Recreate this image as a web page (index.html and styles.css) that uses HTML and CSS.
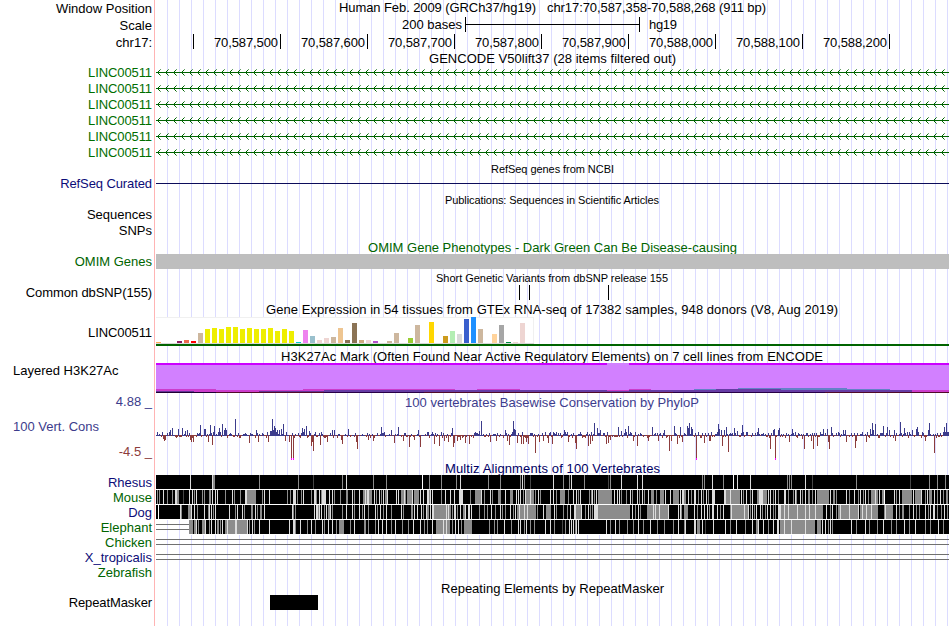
FILE: index.html
```
<!DOCTYPE html>
<html>

<head>
    <meta charset="UTF-8" />
    <title>chr17:70,587,358-70,588,268</title>
    <link rel="stylesheet" href="styles.css">
</head>

<body>
    <main>
        <div class="row h17">
            <label>Window Position</label>
            <svg viewBox="155 0 795 17"><text x="339" y="12" textLength="197">Human Feb. 2009 (GRCh37/hg19)</text><text x="547" y="12" textLength="219">chr17:70,587,358-70,588,268 (911 bp)</text></svg>
        </div>
        <div class="row h17">
            <label>Scale</label>
            <svg viewBox="155 17 795 17"><text x="402" y="29" textLength="60">200 bases</text><path d="M465 17h1v15h-1zM639 17h1v15h-1zM465 24h174v1h-174z" /><text x="649" y="29" textLength="28">hg19</text></svg>
        </div>
        <div class="row h16 low-label">
            <label>chr17:</label>
            <svg viewBox="155 34 795 16" id="ruler"></svg>
        </div>
        <div class="row h14">
            <label></label>
            <svg viewBox="155 50 795 14"><text x="429" y="63" textLength="247">GENCODE V50lift37 (28 items filtered out)</text></svg>
        </div>
        <div class="row h16 gene low-label tight"><label>LINC00511</label><svg viewBox="155 0 795 16"></svg></div>
        <div class="row h16 gene low-label tight"><label>LINC00511</label><svg viewBox="155 0 795 16"></svg></div>
        <div class="row h16 gene low-label tight"><label>LINC00511</label><svg viewBox="155 0 795 16"></svg></div>
        <div class="row h16 gene low-label tight"><label>LINC00511</label><svg viewBox="155 0 795 16"></svg></div>
        <div class="row h16 gene low-label tight"><label>LINC00511</label><svg viewBox="155 0 795 16"></svg></div>
        <div class="row h16 gene low-label tight"><label>LINC00511</label><svg viewBox="155 0 795 16"></svg></div>
        <div class="row h16">
            <label></label>
            <svg viewBox="155 160 795 16"><text class="small" x="491" y="173" textLength="123">RefSeq genes from NCBI</text></svg>
        </div>
        <div class="row h15 navy tight">
            <label>RefSeq Curated</label>
            <svg viewBox="155 176 795 15"><rect x="156" y="183" width="793" height="1" fill="#0c0c5a" /></svg>
        </div>
        <div class="row h16">
            <label></label>
            <svg viewBox="155 191 795 16"><text class="small" x="445" y="204" textLength="214">Publications: Sequences in Scientific Articles</text></svg>
        </div>
        <div class="row h16"><label>Sequences</label></div>
        <div class="row h16"><label>SNPs</label></div>
        <div class="row h15 green">
            <label></label>
            <svg viewBox="155 239 795 15"><text x="368" y="252" textLength="369">OMIM Gene Phenotypes - Dark Green Can Be Disease-causing</text></svg>
        </div>
        <div class="row h16 green">
            <label>OMIM Genes</label>
            <svg viewBox="155 254 795 16"><rect x="156" y="254" width="793" height="15" fill="#bebebe" /></svg>
        </div>
        <div class="row h15">
            <label></label>
            <svg viewBox="155 270 795 15"><text class="small" x="436" y="282" textLength="232">Short Genetic Variants from dbSNP release 155</text></svg>
        </div>
        <div class="row h15 tight">
            <label>Common dbSNP(155)</label>
            <svg viewBox="155 285 795 15"><path d="M519 285h1v15h-1zM529 285h1v15h-1zM608 285h1v15h-1z" /></svg>
        </div>
        <div class="row h17">
            <label></label>
            <svg viewBox="155 300 795 17"><text x="266" y="314" textLength="572">Gene Expression in 54 tissues from GTEx RNA-seq of 17382 samples, 948 donors (V8, Aug 2019)</text></svg>
        </div>
        <div class="row h29 tight">
            <label>LINC00511</label>
            <svg viewBox="155 317 795 29" id="gtex"></svg>
        </div>
        <div class="row h17">
            <label></label>
            <svg viewBox="155 346 795 17"><text x="281" y="361" textLength="542">H3K27Ac Mark (Often Found Near Active Regulatory Elements) on 7 cell lines from ENCODE</text></svg>
        </div>
        <div class="row h30">
            <label class="left">Layered H3K27Ac</label>
            <svg viewBox="155 363 795 30" id="h3k27ac"></svg>
        </div>
        <div class="row h18 cons">
            <label>4.88 _</label>
            <svg viewBox="155 393 795 18"><text x="405" y="407" textLength="294">100 vertebrates Basewise Conservation by PhyloP</text></svg>
        </div>
        <div class="row h50 cons">
            <label class="scores"><span class="left">100 Vert. Cons</span><span class="low">-4.5 _</span></label>
            <svg viewBox="155 411 795 50" id="phylop"></svg>
        </div>
        <div class="row h14 navy">
            <label></label>
            <svg viewBox="155 461 795 14"><text x="445" y="473" textLength="215">Multiz Alignments of 100 Vertebrates</text></svg>
        </div>
        <div class="row h15 navy"><label>Rhesus</label><svg viewBox="155 0 795 15" id="rhesus"></svg></div>
        <div class="row h15 green"><label>Mouse</label><svg viewBox="155 0 795 15" id="mouse"></svg></div>
        <div class="row h15 navy"><label>Dog</label><svg viewBox="155 0 795 15" id="dog"></svg></div>
        <div class="row h15 green"><label>Elephant</label><svg viewBox="155 0 795 15" id="elephant"></svg></div>
        <div class="row h15 green">
            <label>Chicken</label>
            <svg viewBox="155 0 795 15"><path fill="#707070" d="M156 4h793v1h-793zM156 9h793v1h-793z" /></svg>
        </div>
        <div class="row h15 navy">
            <label>X_tropicalis</label>
            <svg viewBox="155 0 795 15"><path fill="#707070" d="M156 4h793v1h-793zM156 9h793v1h-793z" /></svg>
        </div>
        <div class="row h15 green"><label>Zebrafish</label></div>
        <div class="row h15">
            <label></label>
            <svg viewBox="155 580 795 15"><text x="441" y="593" textLength="223">Repeating Elements by RepeatMasker</text></svg>
        </div>
        <div class="row h15 tight">
            <label>RepeatMasker</label>
            <svg viewBox="155 595 795 15"><rect x="270" y="595" width="48" height="15" /></svg>
        </div>
        <div class="row rest"><label></label></div>
    </main>
    <script src="tracks.js"></script>
</body>

</html>
```
FILE: styles.css
```
body {
    margin: 0;
    background-color: #fff;
    font-family: "Liberation Sans", Arial, sans-serif;
    font-size: 13px;
    color: #000;
}

main {
    display: flex;
    flex-direction: column;
    width: 950px;
    height: 626px;
    overflow: hidden;
    /* guide lines every 12px, first one at 167 */
    background: repeating-linear-gradient(to right, #dcdcff 0, #dcdcff 1px, transparent 1px, transparent 12px) 167px 0 no-repeat;
}

.row {
    display: grid;
    grid-template-columns: 155px 795px;
    grid-template-rows: 100%;
    flex: none;
    fill: #000;
}

.row label {
    box-sizing: border-box;
    padding-right: 2px;
    border-right: 1px solid #ffb4b4;
    text-align: right;
    white-space: pre;
}

svg {
    display: block;
    width: 795px;
    height: 100%;
    overflow: visible;
    shape-rendering: crispEdges;
}

.small {
    font-size: 11px;
}

.h14 { height: 14px; line-height: 14px; }
.h15 { height: 15px; line-height: 15px; }
.h16 { height: 16px; line-height: 16px; }
.h17 { height: 17px; line-height: 17px; }
.h18 { height: 18px; line-height: 18px; }
.h29 { height: 29px; line-height: 31px; }
.h30 { height: 30px; line-height: 15px; }
.h50 { height: 50px; line-height: 15px; }

.rest {
    flex: 1;
}

.low-label {
    line-height: 18px;
}

.tight label {
    letter-spacing: -0.1px;
}

.navy {
    color: #0c0c78;
    fill: #000064;
}

.green {
    color: #006400;
    fill: #006400;
}

.gene {
    color: #006e00;
    fill: #006400;
}

.cons {
    color: #3c3c8c;
    fill: #3c3c8c;
}

.row .left {
    padding-left: 13px;
    text-align: left;
}

.row .scores {
    display: flex;
    flex-direction: column;
    padding-top: 8px;
    gap: 10px;
}

.row .low {
    color: #8c3c3c;
}
```
FILE: tracks.js
```
function rect(x, y, w, h, color) {
    return `<rect x="${x}" y="${y}" width="${w}" height="${h}" fill="${color}"/>`;
}

// base position ruler
let ruler = '<rect x="193" y="34" width="1" height="15"/>';
['70,587,500', '70,587,600', '70,587,700', '70,587,800', '70,587,900', '70,588,000', '70,588,100', '70,588,200'].forEach((pos, i) => {
    let x = 280 + i * 87;
    ruler += `<text x="${x - 66}" y="47" textLength="64">${pos}</text><rect x="${x}" y="34" width="1" height="15"/>`;
});
document.getElementById('ruler').innerHTML = ruler;

// genes on the minus strand
let gene = rect(156, 8, 793, 1, '#006400');
for (let x = 157; x < 947; x += 8) {
    gene += `<path d="M${x + 1} 7h1v3h-1zM${x + 2} 6h1v1h-1zM${x + 2} 10h1v1h-1z"/>`;
    gene += `<path opacity=".6" d="M${x + 3} 5h1v1h-1zM${x + 3} 11h1v1h-1z"/>`;
}
document.querySelectorAll('.gene svg').forEach(svg => svg.innerHTML = gene);

// GTEx, one bar for each tissue
let tissues = [
    [1, '#ffaa56'], [0, '#cdb79e'], [0, '#8fbc8f'], [2, '#8b1c62'], [3, '#ee6a50'], [2, '#ff0000'], [10, '#cdb79e'],
    [14, '#eeee00'], [15, '#eeee00'], [14, '#eeee00'], [16, '#eeee00'], [16, '#eeee00'], [14, '#eeee00'], [15, '#eeee00'],
    [14, '#eeee00'], [14, '#eeee00'], [15, '#eeee00'], [12, '#eeee00'], [14, '#eeee00'], [12, '#eeee00'],
    [1, '#00cdcd'], [13, '#ee82ee'], [7, '#9ac0cd'], [3, '#eed5d2'], [5, '#eed5d2'], [6, '#cdb79e'], [15, '#eec591'],
    [3, '#8b7355'], [20, '#8b7355'], [3, '#cdaa7d'], [3, '#eed5d2'], [2, '#b452cd'], [0, '#7a378b'], [2, '#cdb79e'],
    [10, '#cdb79e'], [0, '#cdb79e'], [5, '#9acd32'], [18, '#cdb79e'], [0, '#7a67ee'], [21, '#ffd700'], [0, '#ffb6c1'],
    [7, '#cd9b1d'], [12, '#b4eeb4'], [9, '#d9d9d9'], [24, '#3a5fcd'], [26, '#1e90ff'], [14, '#cdb79e'], [0, '#cdb79e'],
    [9, '#ffd39b'], [18, '#a6a6a6'], [1, '#008b45'], [1, '#eed5d2'], [20, '#eed5d2'], [0, '#ff00ff']
];
let gtex = rect(156, 317, 378, 27, '#f0f0f0') + rect(156, 318, 377, 25, '#fff') + rect(156, 343, 378, 1, '#d8d8d8');
tissues.forEach(([h, color], i) => gtex += rect(156 + i * 7, 343 - h, 5, h, color));
gtex += rect(156, 344, 793, 2, '#006400');
document.getElementById('gtex').innerHTML = gtex;

// H3K27Ac, layered signal of the cell lines
document.getElementById('h3k27ac').innerHTML =
    rect(156, 363, 793, 30, '#d280ff') + rect(156, 363, 451, 2, '#cc00ff') + rect(629, 363, 320, 2, '#cc00ff') +
    rect(156, 390, 793, 2, '#cc3ccc') +
    [[156, 60], [303, 152], [477, 43], [629, 22]].map(([x, w]) => rect(x, 389, w, 1, '#cc3ccc')).join('') +
    rect(156, 391, 38, 1, '#663399') + rect(259, 391, 65, 1, '#663399') + rect(324, 390, 283, 2, '#663ca5') +
    rect(607, 391, 22, 1, '#663ca5') + rect(629, 390, 283, 2, '#663ca5') +
    rect(716, 389, 131, 1, '#663ca5') + rect(694, 389, 22, 1, '#6482c8') + rect(738, 388, 109, 1, '#6482c8') +
    rect(781, 389, 109, 1, '#6482c8') + rect(156, 392, 793, 1, '#500a28') +
    rect(156, 392, 60, 1, '#1e0032') + rect(324, 392, 100, 1, '#280046') + rect(673, 392, 152, 1, '#280046');

// PhyloP, [offset, score in pixels]
let scores = [
    [1, 3], [7, -4], [8, -6], [9, -5], [13, 3], [14, 5], [16, 7], [22, 6], [26, 7], [29, 4], [31, 5], [34, -5], [35, -7], [37, -7], [44, 10],
    [48, 6], [49, 6], [52, -7], [54, 10], [56, -10], [58, 9], [63, 7], [66, 11], [68, 5], [69, 7], [70, 5], [79, 16], [93, -8], [100, 5],
    [102, -7], [112, -7], [114, 4], [115, 4], [116, 16], [117, 5], [118, 9], [119, 7], [121, 5], [123, 5], [125, 6], [127, 11], [129, -6],
    [133, -7], [135, -25], [137, -25], [146, 7], [148, 6], [150, 9], [153, 4], [155, -11], [156, -7], [157, -16], [164, -10], [171, -7],
    [176, 5], [178, 5], [185, -5], [186, -9], [192, 6], [200, -7], [201, -14], [212, -5], [217, -6], [225, 8], [235, 5], [238, -8],
    [242, 8], [247, -6], [253, -12], [258, -5], [262, 5], [264, -12], [278, -9], [283, -11], [288, -6], [292, -7], [296, 7], [297, -12],
    [298, -8], [301, -6], [304, -5], [309, -8], [313, -9], [323, 4], [325, 14], [334, -7], [340, -6], [349, 5], [351, -6], [353, -10],
    [357, 14], [358, 6], [359, 5], [361, -8], [365, -9], [367, -9], [370, -7], [372, -9], [379, -18], [383, -7], [387, -6], [392, -8],
    [396, -9], [408, 5], [412, -7], [419, -8], [420, -14], [432, -11], [434, -9], [436, -6], [438, 12], [441, 7], [444, 5], [450, -9],
    [452, -8], [454, -5], [462, 8], [465, 4], [469, 6], [472, 9], [477, -6], [481, -11], [492, -6], [496, 8], [502, -6], [508, 5],
    [513, -16], [515, -6], [518, 9], [521, -9], [524, 8], [526, -7], [531, 9], [532, 7], [533, 12], [535, 8], [536, 6], [540, -25],
    [548, -8], [553, -6], [554, -6], [562, 11], [563, 6], [565, 5], [566, -11], [568, 5], [570, 8], [572, -17], [578, 7], [581, 4],
    [586, 10], [602, 7], [614, -14], [617, 5], [618, 6], [619, -25], [622, 5], [623, 7], [633, -7], [636, 6], [646, -4], [648, -14],
    [655, -6], [657, -14], [661, -11], [667, 6], [671, 6], [672, -7], [673, -14], [675, 8], [687, 5], [689, 5], [690, -7], [699, -13],
    [700, -6], [710, -7], [714, 6], [716, 12], [717, 5], [719, 11], [727, 9], [731, 8], [733, 5], [738, 5], [739, -6], [744, 13],
    [748, 7], [756, 5], [760, 6], [761, 8], [769, -6], [772, 5], [773, 12], [778, -18], [788, 8], [790, 12]
];
let phylop = '', peaks = new Map(scores), seed = 17;
for (let i = 0; i < 793; i++) {
    seed = (seed * 1103 + 12345) % 65536;
    let v = peaks.get(i) || Math.round((seed / 65536 - 0.5) * 6);
    let mean = v < 0 ? '#8c3c3c' : '#3c3c8c';
    phylop += rect(156 + i, 435, 1, 1, mean);
    phylop += v > 0 ? rect(156 + i, 435 - v, 1, v, mean) : rect(156 + i, 436, 1, Math.max(0, -v - 1), mean);
    if (v == -25) {
        phylop += rect(156 + i, 458, 1, 2, '#ff00ff');
    }
}
document.getElementById('phylop').innerHTML = phylop;

// alignments: offset, shade, optional width
let shades = { w: '#ffffff', l: '#dcdcdc', g: '#8c8c8c', d: '#464646', k: '#000000' };
function align(id, start, bands) {
    let svg = rect(156 + start, 0, 793 - start, 15, '#fff') + rect(156 + start, 0, 793 - start, 14, '#000');
    // no alignment before start, draw the double line
    if (start) {
        svg += rect(156, 4, start, 1, '#707070') + rect(156, 9, start, 1, '#707070');
    }
    bands.trim().split(/\s+/).forEach(band => {
        let [, x, shade, w] = band.match(/(\d+)([a-z])(\d*)/);
        svg += rect(156 + +x, 0, w || 1, 14, shades[shade]);
    });
    document.getElementById(id).innerHTML = svg;
}

align('rhesus', 0, `34l 56l 57g2 103g 142g 157d 186g 190l 217g 230g 266w 273g 285g 300g 304l 332g 344g 364g 366l 368g 374d
    397l 407g 413g 415l 428g 452d 454g 465l 481l 486l 546g 548g 556l 567g 577w 581l 594l 631g 633g 635g 649l 656d 700g 754d
    773g 781g 789g`);
align('mouse', 0, `1g 3g 7l 11g 16g 19l2 21g2 27d 33l 36l 38g 40l 46g 48g 53g2 56l 59l 61l 69g 76l 78g 84g 89l2 91g9 106g 108l 113l
    131g 134g 137l3 141g 145g 147l 155g 158l2 160g 163l 165g 166l4 173l 176l 178g 184g 190g2 196l 198g 203l 207g4 209l 211l2 213g3
    218l 220g 223l 225g 227l 229g2 231l 240l 242l 245g5 248l 251g5 256l 258g5
    264l 266k 267l 271l2 273g 274l 276l 285g 289l 294l 298l 303l4 314g 319g6 325l 328g 334l 336g 342g3 349l 354g3 360l 362l 364l
    367g 369l 370g8 374l 379g 382l 384g 394l 397l 400g 404g5 412g 417l 420l 422g 424l 433g 435g 436l 438g 440l 442g14 458l 461l
    463l 465g 470g 474l 476g 481l 483g 486l 488g 492l 495g3 500g 504g4 509l 514l 517g6 524l 528g2 532l
    526l2 529g 532l 535g 538l2 542g 545l 547g 550l 552g 556l3 568l2 570g5 574l 575g9 585l 587g 590l 594g 596l 601g2 603l4 607g4
    612l 614l 617g 619l 622g 628l2 632g 637g 639l 640g 644l 646g 649l 652g2 656g 659l 661g12 674l 677g2 680g 690l 693g 698l 702g
    704l 707g 709l 712g 715g7 719l 723l 726g2 728w 738l 740g 743l 746g10 757l 759g7 765l 769g 771l 773g3 778l 781g 784l 787g 790g2`);
align('dog', 0, `2w 24l 25g 32g3 35l 38l 41g 48l 52g 53l 55l 57g 59l 73l 79g 81l 86l 88g 95g2 99l 101g 104g2 108l 136l 137g 139g 158l
    160l2 162g 163l 165l 168g 170l 172g2 174l 176g 186g 190l 196l 198g 203l 206g 208l 212g 219l 221g 224l 227g 230l 235g 245l
    247g 255g2 258l 261l 265l 267g 270l 271g2 274l 276l2 278g17 290l 292l 296g 298l2 301g 304l 307g2 309l 312l2 315l 323g 328g
    331g 335l 339g 344l 346g 349g 354l 357g 359l 361g19 363l 368l 371l 381g 387l 390g5 398l 400g 407g 411g 414l 418l2 420g5 425l
    429g 432l 434g 436g 438l4 442g32 476l 479g 482l 484g 491g22 497l 499l 503l 512l 522l 525g 528g2 531l 524l 530g2 538l 541g
    545l 548l 551l 553g 556l2 561l 564g 567l 574g18 575l 588l 592l 594g 596l 598g 600l 604l 606g 609g 611l 614l 617g 619g 622l3
    625g42 628l 632l 641l 649l 653l 659l 668k 670l 674g 676l 680g 682g20 684l 693l 699g 702l 703k 704g18 706l 710l 715l 722k2
    728g9 729l 740l 743g 746g2 753g 757l 760g 763g 769l 772g 774l 777l2 781g 785g 788l 791g`);
align('elephant', 33, `33g4 38g2 40l 42g 46g3 49l 53g 55l 59l 61g2 64g 66l 69g22 71l 79l2 91l 93g 96l 98g 103l 113l 133l 137l2 139g
    144l 151g 155l 159g 166l 168g 172l 176l 180g 183g5 194g 198l 208g2 212g 219g 222l 226l 230l 235g 239l 246g 252g 257l 264l
    268g 271g 276l 280g14 287l 290l 296g 299l 302l 305g 308g8 333g 338g 341g 348l 355g 362l 364l 368g 370l 374g 378g 389l 394l
    398g 406d 409g 413l 415l 417l 419g 420l 422l 450l 454g 459l 463g 471g 477g 482l 487g 494l 501g 508g 517g 522l 528g 529l
    538l2 541g3 546l 549d 557l 569l 574g 580l 589g 596l 600g2 602l 607l 612g 617l 621l2 624g35 628l 635l 649l 661g4 666l 669l
    672g 674l 676g 679k 695l 700g 709l 713g 721g 727l 735g 740g 748l 753g 759l 769g 774g 782l 787g`);
```
